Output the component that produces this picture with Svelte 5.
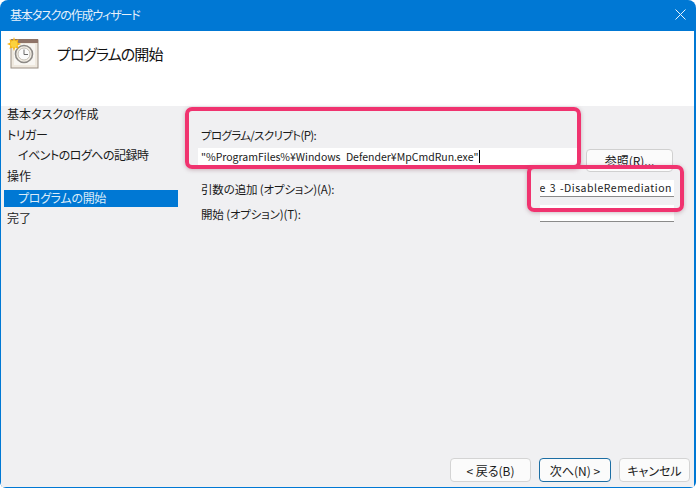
<script>
  const steps = [
    { label: '基本タスクの作成' },
    { label: 'トリガー', tight: true },
    { label: 'イベントのログへの記録時', sub: true, tight: true },
    { label: '操作' },
    { label: 'プログラムの開始', sub: true, active: true, tight: true },
    { label: '完了' }
  ];
</script>

<div class="window">
  <div class="titlebar">
    <span class="title">基本タスクの作成ウィザード</span>
    <svg class="close" width="11" height="11" viewBox="0 0 11 11"><path d="M.5 .5L10.5 10.5M10.5 .5L.5 10.5" stroke="#e8f3fc" stroke-width="1" fill="none"/></svg>
  </div>
  <div class="inner">
    <header class="head">
      <svg class="icon" width="34" height="34" viewBox="0 0 34 34">
        <rect x="5" y="3" width="27" height="28" fill="#efe9df" stroke="#9a8f84"/>
        <rect x="5" y="2" width="27" height="4" fill="#8f7468"/>
        <rect x="8" y="7" width="21" height="21" fill="#f8f6f2"/>
        <circle cx="18" cy="17" r="8.5" fill="#f3efe6" stroke="#8d8a86" stroke-width="1.6"/>
        <circle cx="18" cy="17" r="6" fill="#fbfbfb" stroke="#c4bfb6"/>
        <path d="M18 12.5V17.5H22" stroke="#6b6b6b" stroke-width="1" fill="none"/>
        <path d="M8 0L9.2 3.5L12.5 2.2L11.6 5.6L15 7L11.6 8.4L12.5 11.8L9.2 10.5L8 14L6.8 10.5L3.5 11.8L4.4 8.4L1 7L4.4 5.6L3.5 2.2L6.8 3.5Z" fill="#f7b617"/>
        <circle cx="8" cy="7" r="3.4" fill="#fbd23f"/>
      </svg>
      <h1>プログラムの開始</h1>
    </header>
    <div class="body">
      <nav class="steps">
        {#each steps as s}
          <div class="step" class:sub={s.sub} class:active={s.active} class:tight={s.tight}>{s.label}</div>
        {/each}
      </nav>
      <main class="form">
        <div class="label first">プログラム/スクリプト(P):</div>
        <div class="prog-row">
          <div class="input prog">"%ProgramFiles%¥Windows Defender¥MpCmdRun.exe"<span class="caret"></span></div>
          <button class="browse">参照(R)...</button>
        </div>
        <div class="row args">
          <div class="label">引数の追加 (オプション)(A):</div>
          <div class="input small"><span>e 3 -DisableRemediation</span></div>
        </div>
        <div class="row start">
          <div class="label">開始 (オプション)(T):</div>
          <div class="input small"></div>
        </div>
      </main>
    </div>
    <footer class="foot">
      <button class="btn back">&lt; 戻る(B)</button>
      <button class="btn next">次へ(N) &gt;</button>
      <button class="btn cancel">キャンセル</button>
    </footer>
    <div class="mark mark-a"></div>
    <div class="mark mark-b"></div>
  </div>
</div>

<style>
  :global(body) { margin: 0; background: #fff; }
  .window {
    width: 696px; height: 488px; box-sizing: border-box;
    background: #0078d4; border-radius: 8px 8px 6px 6px; overflow: hidden;
    display: flex; flex-direction: column;
    padding: 0 2px 1px 1px;
    font-family: "Noto Sans CJK JP", "Liberation Sans", sans-serif;
    font-size: 12px; color: #1a1a1a;
    font-feature-settings: "palt";
  }
  .titlebar { height: 31px; flex: none; display: flex; align-items: center; justify-content: space-between; padding: 0 8px 2px 9px; box-sizing: border-box; }
  .title { color: #e6f1fb; font-size: 12px; letter-spacing: -1.15px; }
  .inner { flex: 1; position: relative; display: flex; flex-direction: column; background: #f0f0f2; }
  .head { height: 75px; flex: none; background: #fff; display: flex; align-items: flex-start; }
  .icon { margin: 6px 0 0 5px; }
  h1 { margin: 12px 0 0 17px; font-size: 15px; font-weight: 400; line-height: 22px; color: #111; letter-spacing: -.95px; }
  .body { flex: 1; display: flex; }
  .steps { width: 177px; flex: none; padding: 0 0 0 3px; box-sizing: border-box; }
  .step { height: 21px; line-height: 17px; padding-left: 3px; }
  .step.tight { letter-spacing: -.5px; }
  .steps .step:first-child { height: 18px; line-height: 16px; }
  .step:nth-child(2) { padding-top: 2px; height: 20px; }
  .step.sub { padding-left: 14px; }
  .step.active { background: #0078d4; color: #dcecf9; height: 17px; line-height: 15px; margin: 2px 0 2px; letter-spacing: -.3px; }
  .form { flex: 1; padding: 0 20px 0 20px; min-width: 0; }
  .label { white-space: nowrap; font-size: 11.5px; letter-spacing: -.15px; padding-left: 3px; }
  .label.first { margin-top: 21px; line-height: 16px; letter-spacing: -.65px; }
  .prog-row { display: flex; align-items: flex-start; margin-top: 5px; }
  .input { background: #fff; font-size: 10.5px; white-space: nowrap; overflow: hidden; letter-spacing: 0; word-spacing: 3px; }
  .prog { width: 380px; height: 17px; line-height: 17px; padding-left: 3px; box-sizing: border-box; }
  .caret { display: inline-block; width: 1px; height: 13px; background: #000; vertical-align: -2px; margin-left: 1px; }
  .browse {
    margin: 1px 0 0 8px; width: 87px; height: 23px; padding: 0;
    font: inherit; font-size: 12px; color: #1a1a1a;
    background: #fbfbfb; border: 1px solid #d0d0d0; border-radius: 4px;
  }
  .row { display: flex; justify-content: space-between; align-items: center; }
  .args { margin-top: 8px; }
  .start { margin-top: 8px; }
  .small { width: 134px; height: 17px; line-height: 16px; border-bottom: 1px solid #8a8a8a; padding-right: 2px; box-sizing: border-box; display: flex; justify-content: flex-end; letter-spacing: .5px; word-spacing: 1px; }
  .small span { flex: none; }
  .foot { flex: none; display: flex; justify-content: flex-end; gap: 8px; padding: 0 4px 5px 0; }
  .btn {
    height: 24px; padding: 0; font: inherit; font-size: 12px; color: #1a1a1a;
    background: #fbfbfb; border: 1px solid #d4d4d4; border-radius: 4px;
  }
  .back { width: 81px; }
  .next { width: 72px; border-color: #1c6ea4; }
  .cancel { width: 71px; }
  .mark {
    position: absolute; box-sizing: border-box; border: 4px solid #f0336f; border-radius: 7px;
    box-shadow: 0 1px 4px rgba(120, 60, 80, .35);
  }
  .mark-a { left: 184px; top: 76px; width: 396px; height: 62px; }
  .mark-b { left: 526px; top: 134px; width: 157px; height: 47px; }
</style>
